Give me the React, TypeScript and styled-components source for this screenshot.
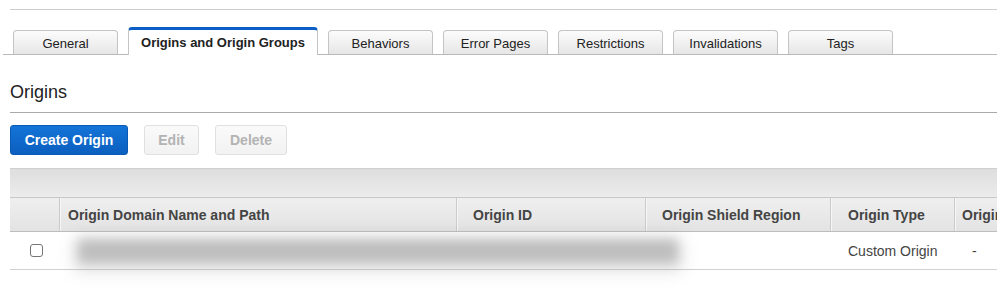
import styled, { createGlobalStyle } from 'styled-components';

const GlobalStyle = createGlobalStyle`
  html, body {
    margin: 0;
    padding: 0;
    background: #fff;
    overflow: hidden;
  }
  body {
    font-family: "Liberation Sans", Arial, Helvetica, sans-serif;
    color: #333;
  }
`;

const Page = styled.div`
  width: 997px;
  height: 295px;
  overflow: hidden;
  padding-top: 9px;
  box-sizing: border-box;
`;

const TopRule = styled.div`
  margin-left: 10px;
  border-top: 1px solid #cdcdcd;
`;

const TabBar = styled.div`
  margin: 17px 0 0 3px;
  padding-left: 10px;
  height: 27px;
  display: flex;
  align-items: flex-end;
  gap: 10px;
  border-bottom: 1px solid #b9b9b9;
`;

const Tab = styled.div<{ $active?: boolean; $width: number }>`
  width: ${(p) => p.$width}px;
  height: ${(p) => (p.$active ? 28 : 24)}px;
  box-sizing: border-box;
  display: flex;
  align-items: center;
  justify-content: center;
  border: 1px solid #c4c4c4;
  border-bottom: none;
  border-radius: 4px 4px 0 0;
  font-size: 13px;
  color: #222;
  font-weight: ${(p) => (p.$active ? 700 : 400)};
  background: ${(p) => (p.$active ? '#fff' : 'linear-gradient(#fcfcfc, #e6e6e6)')};
  border-top: ${(p) => (p.$active ? '3px solid #0b5fc4' : '1px solid #c4c4c4')};
  margin-bottom: ${(p) => (p.$active ? '-1px' : '0')};
  padding-top: ${(p) => (p.$active ? '0' : '1px')};
`;

const Section = styled.section`
  margin: 27px 0 0 10px;
`;

const Heading = styled.h2`
  margin: 0;
  font-size: 18px;
  line-height: 20px;
  font-weight: 400;
  color: #222;
  padding-bottom: 10px;
  border-bottom: 1px solid #a9a9a9;
`;

const Toolbar = styled.div`
  display: flex;
  gap: 16px;
  margin-top: 12px;
`;

const Button = styled.button<{ $primary?: boolean; $width: number }>`
  width: ${(p) => p.$width}px;
  height: 30px;
  box-sizing: border-box;
  padding: 0;
  border-radius: 3px;
  font-family: inherit;
  font-size: 14px;
  font-weight: 700;
  cursor: default;
  border: 1px solid ${(p) => (p.$primary ? '#0a5ab5' : '#e0e0e0')};
  color: ${(p) => (p.$primary ? '#fff' : '#b3b3b3')};
  background: ${(p) =>
    p.$primary ? 'linear-gradient(#1474d8, #0b5fbf)' : 'linear-gradient(#fafafa, #f2f2f2)'};
`;

const Table = styled.div`
  margin-top: 13px;
  width: 1100px;
`;

const Band = styled.div`
  height: 28px;
  border-top: 1px solid #cfcfcf;
  background: linear-gradient(#dedede, #ececec);
`;

const Row = styled.div<{ $head?: boolean }>`
  position: relative;
  display: flex;
  height: ${(p) => (p.$head ? 33 : 37)}px;
  border-top: ${(p) => (p.$head ? '1px solid #c9c9c9' : 'none')};
  border-bottom: 1px solid ${(p) => (p.$head ? '#bdbdbd' : '#d2d2d2')};
  background: ${(p) => (p.$head ? 'linear-gradient(#efefef, #e3e3e3)' : '#fff')};
`;

const Cell = styled.div<{ $width: number; $pad: number; $head?: boolean }>`
  flex: 0 0 ${(p) => p.$width}px;
  box-sizing: border-box;
  display: flex;
  align-items: center;
  padding-left: ${(p) => p.$pad}px;
  font-size: 14px;
  white-space: nowrap;
  color: #444;
  font-weight: ${(p) => (p.$head ? 700 : 400)};
  border-right: ${(p) => (p.$head ? '1px solid #cbcbcb' : 'none')};
  box-shadow: ${(p) => (p.$head ? '1px 0 0 #f6f6f6' : 'none')};
`;

const Checkbox = styled.span`
  width: 13px;
  height: 13px;
  box-sizing: border-box;
  border: 1px solid #767676;
  border-radius: 3px;
  background: #fff;
`;

// blurred-out domain name and origin id
const Redacted = styled.div`
  position: absolute;
  left: 68px;
  top: 7px;
  width: 600px;
  height: 24px;
  background: #bebebe;
  filter: blur(6px);
  box-shadow: 0 4px 14px 4px rgba(0, 0, 0, 0.12);
`;

const tabs = [
  { label: 'General', width: 105 },
  { label: 'Origins and Origin Groups', width: 190, active: true },
  { label: 'Behaviors', width: 105 },
  { label: 'Error Pages', width: 105 },
  { label: 'Restrictions', width: 105 },
  { label: 'Invalidations', width: 105 },
  { label: 'Tags', width: 105 },
];

const columns = [
  { label: '', width: 50, pad: 0 },
  { label: 'Origin Domain Name and Path', width: 397, pad: 8 },
  { label: 'Origin ID', width: 189, pad: 16 },
  { label: 'Origin Shield Region', width: 185, pad: 16 },
  { label: 'Origin Type', width: 124, pad: 17 },
  { label: 'Origin Path', width: 150, pad: 7 },
];

const rowValues = ['', '', '', '', 'Custom Origin', '-'];

const App = () => {
  return (
    <Page>
      <GlobalStyle />
      <TopRule />
      <TabBar>
        {tabs.map((t) => (
          <Tab key={t.label} $active={t.active} $width={t.width}>
            {t.label}
          </Tab>
        ))}
      </TabBar>
      <Section>
        <Heading>Origins</Heading>
        <Toolbar>
          <Button $primary $width={118}>
            Create Origin
          </Button>
          <Button $width={55}>Edit</Button>
          <Button $width={72}>Delete</Button>
        </Toolbar>
        <Table>
          <Band />
          <Row $head>
            {columns.map((c, i) => (
              <Cell key={i} $head $width={c.width} $pad={c.pad}>
                {c.label}
              </Cell>
            ))}
          </Row>
          <Row>
            {columns.map((c, i) => (
              <Cell key={i} $width={c.width} $pad={i === 0 ? 20 : 17}>
                {i === 0 ? <Checkbox /> : rowValues[i]}
              </Cell>
            ))}
            <Redacted />
          </Row>
        </Table>
      </Section>
    </Page>
  );
};

export default App;
